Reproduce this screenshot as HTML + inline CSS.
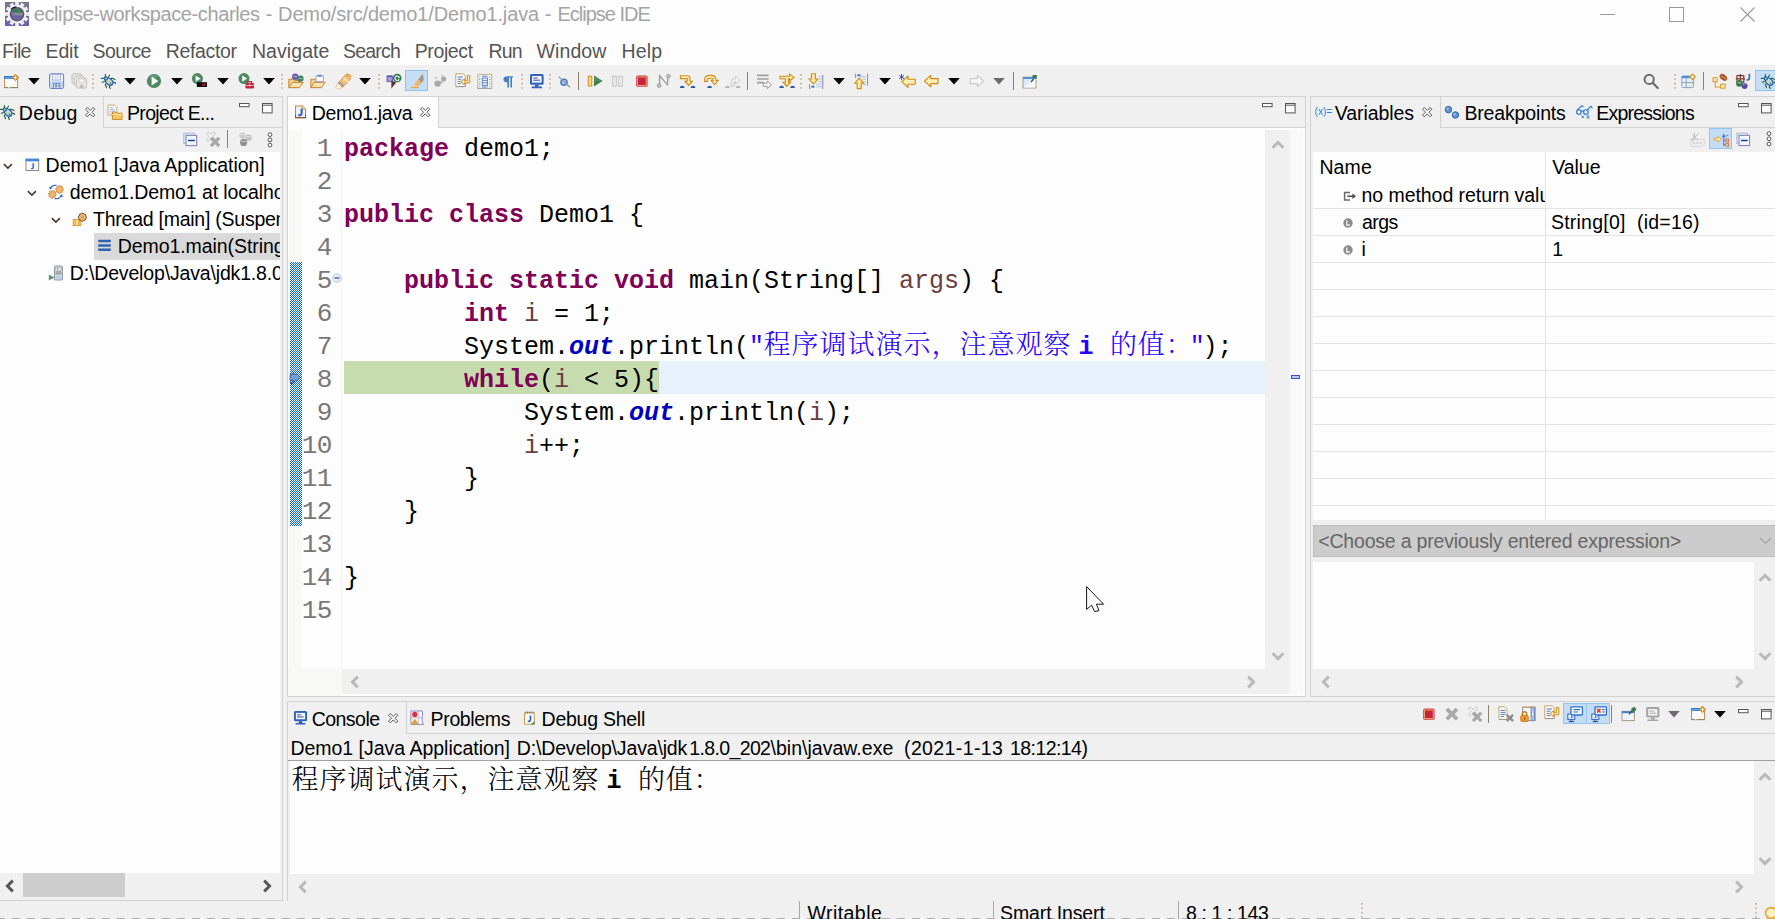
<!DOCTYPE html>
<html><head><meta charset="utf-8"><title>eclipse-workspace-charles - Demo/src/demo1/Demo1.java - Eclipse IDE</title>
<style>
html,body{margin:0;padding:0;}
body{width:1775px;height:919px;overflow:hidden;position:relative;background:#f0f0f0;font-family:'Liberation Sans','Noto Sans CJK SC',sans-serif;}
div,span,svg{position:absolute;box-sizing:border-box;}
.t{white-space:pre;line-height:1;color:#000;font-family:'Liberation Sans','Noto Sans CJK SC',sans-serif;}
.m{font-family:'Liberation Mono','Noto Serif CJK SC',monospace;}
.c{font-family:'Liberation Mono','Noto Serif CJK SC',serif;font-weight:300;}
svg{overflow:visible;}

</style></head><body>
<div style="left:0px;top:0px;width:1775px;height:65px;background:#fdfdfd;"></div>
<div style="left:1600px;top:14px;width:15px;height:1px;background:#999;"></div>
<div style="left:1669px;top:7px;width:15px;height:15px;border:1px solid #999;"></div>
<svg style="left:1740px;top:7px" width="15" height="15" viewBox="0 0 15 15"><path d="M0.5 0.5L14.5 14.5M14.5 0.5L0.5 14.5" stroke="#999" stroke-width="1.1" fill="none"/></svg>
<div style="left:405px;top:70px;width:23px;height:21px;background:#c5def5;border:1px solid #8fc1ec;"></div>
<div style="left:1755px;top:70px;width:21px;height:21px;background:#c5def5;border:1px solid #8fc1ec;"></div>
<svg style="left:3px;top:73px" width="16" height="16" viewBox="0 0 16 16"><rect x="1.6" y="3.6" width="13" height="11" fill="#f8fafe" stroke="#c08a5a" stroke-width="1"/><path d="M1.2 14.6H15" stroke="#8f7f6a" stroke-width="1"/><rect x="1.2" y="3" width="9.6" height="2.8" fill="#2a78cc"/><path d="M2 4.4h8" stroke="#62b0f4" stroke-width="0.9"/><path d="M5 14.6C9 13.8 11.6 11.4 12.4 8" stroke="#fbe9b4" stroke-width="1.1" fill="none" stroke-dasharray="1 0.6"/><path d="M12.5 0.7L16.1 4.4L12.5 8.1L8.9 4.4Z" fill="#c8861c"/><path d="M12.5 1.9L13.2 3.7L15 4.4L13.2 5.1L12.5 6.9L11.8 5.1L10 4.4L11.8 3.7Z" fill="#fff6de"/></svg>
<svg style="left:27.5px;top:78px" width="12" height="7" viewBox="0 0 12 7"><path d="M0.2 0H11.8L6 6.4Z" fill="#000"/></svg>
<svg style="left:48px;top:73px" width="16" height="16" viewBox="0 0 16 16"><rect x="1.6" y="0.8" width="14" height="14.6" rx="1.6" fill="#eef4fc" stroke="#6388cc" stroke-width="1.1"/><rect x="2.2" y="8" width="12.8" height="6.8" fill="#c2daf6"/><rect x="4.6" y="1.4" width="8" height="5.6" fill="#fbfcfe" stroke="#9aa6c8" stroke-width="0.8"/><path d="M6 3.2h5.2M6 5h5.2" stroke="#c2c8da" stroke-width="0.8"/><rect x="5.4" y="10.4" width="6.4" height="5" fill="#e4ecf8" stroke="#5c7fc0" stroke-width="0.9"/><rect x="7" y="11.4" width="2" height="3" fill="#7a8fb8"/><rect x="9.6" y="11.4" width="1" height="3" fill="#7a8fb8"/></svg>
<svg style="left:71px;top:73px" width="16" height="16" viewBox="0 0 16 16"><g fill="#ececec" stroke="#bdbdbd" stroke-width="1"><rect x="1" y="0.8" width="9.5" height="9.5" rx="1.2"/><rect x="3.2" y="3" width="9.5" height="9.5" rx="1.2"/><rect x="5.5" y="5.3" width="9.8" height="9.8" rx="1.2"/></g><rect x="8" y="5.8" width="5" height="3.6" fill="#f6f6f6" stroke="#c8c8c8" stroke-width="0.7"/><rect x="8.6" y="11.6" width="3.8" height="3.4" fill="#bdbdbd"/></svg>
<svg style="left:92.2px;top:74px" width="2" height="16" viewBox="0 0 2 16"><path d="M0.2 0h1.6v1.8h-1.6zM0.2 4.4h1.6v1.6h-1.6zM0.2 8.8h1.6v1.6h-1.6zM0.2 13.2h1.6v1.6h-1.6z" fill="#c9ab8b"/></svg>
<svg style="left:100px;top:73px" width="16" height="16" viewBox="0 0 16 16"><g stroke="#2c6e3e" stroke-width="1.15" fill="none" stroke-linecap="round"><path d="M5.4 1.2V3.8M9.5 2.1L8.3 4.4M1.2 5.4H3.9M2.3 9.4L4.5 8.3M11 5.4H12.8L15 6.6M13.3 9.4H14.8L15.6 10.4M5.4 11.1V12.6L6.4 13.3V14.7M9.5 13.3V14.5L10.4 15.3"/></g><ellipse cx="9.25" cy="8.7" rx="3.05" ry="4.2" transform="rotate(-48 9.25 8.7)" fill="#d4d8cf" stroke="#1e5cb8" stroke-width="1.3"/><path d="M8.2 8.8L10.2 7.2L10.6 8.4L9 10Z" fill="#b4e08c"/><circle cx="10.6" cy="10.4" r="0.9" fill="#3f7a4a"/><circle cx="5.8" cy="5.5" r="1.6" fill="#b9e090" stroke="#1e5cb8" stroke-width="1.2"/></svg>
<svg style="left:124.4px;top:78px" width="12" height="7" viewBox="0 0 12 7"><path d="M0.2 0H11.8L6 6.4Z" fill="#000"/></svg>
<svg style="left:146px;top:73px" width="16" height="16" viewBox="0 0 16 16"><circle cx="8" cy="8" r="7.1" fill="#4b8963"/><path d="M3 4.5A6.5 6.5 0 0 1 12 2.6L8 8Z" fill="#6c9f80" opacity=".6"/><path d="M5.6 3.6V12.4L12.4 8Z" fill="#fdfdfd"/></svg>
<svg style="left:170.5px;top:78px" width="12" height="7" viewBox="0 0 12 7"><path d="M0.2 0H11.8L6 6.4Z" fill="#000"/></svg>
<svg style="left:191px;top:73px" width="16" height="16" viewBox="0 0 16 16"><circle cx="6.4" cy="5.6" r="5.5" fill="#4b8963"/><path d="M4.6 2.4V8.8L9.6 5.6Z" fill="#fdfdfd"/><rect x="5.8" y="9.2" width="10.2" height="4.8" fill="#0a0a0a"/><rect x="11.2" y="10.2" width="3.4" height="2.8" fill="#a8101a"/></svg>
<svg style="left:216.5px;top:78px" width="12" height="7" viewBox="0 0 12 7"><path d="M0.2 0H11.8L6 6.4Z" fill="#000"/></svg>
<svg style="left:238px;top:73px" width="16" height="16" viewBox="0 0 16 16"><circle cx="6" cy="5.6" r="5.5" fill="#4b8963"/><path d="M4.2 2.4V8.8L9.2 5.6Z" fill="#fdfdfd"/><rect x="7.4" y="10" width="8.6" height="5.4" rx="0.8" fill="#c8213a"/><path d="M9.8 10V8.6h3.8V10" fill="none" stroke="#c8213a" stroke-width="1.2"/><path d="M7.4 12.4h8.6" stroke="#f4b9c0" stroke-width="0.9"/><rect x="10.8" y="11.6" width="1.8" height="1.6" fill="#f7d9dd"/></svg>
<svg style="left:262.5px;top:78px" width="12" height="7" viewBox="0 0 12 7"><path d="M0.2 0H11.8L6 6.4Z" fill="#000"/></svg>
<svg style="left:281.0px;top:74px" width="2" height="16" viewBox="0 0 2 16"><path d="M0.2 0h1.6v1.8h-1.6zM0.2 4.4h1.6v1.6h-1.6zM0.2 8.8h1.6v1.6h-1.6zM0.2 13.2h1.6v1.6h-1.6z" fill="#c9ab8b"/></svg>
<svg style="left:288px;top:73px" width="16" height="16" viewBox="0 0 16 16"><path d="M0.8 6.2h4.4l1.2 1.4h4.8v7H0.8z" fill="#f3cf8f" stroke="#c98a35" stroke-width="1"/><path d="M0.8 14.6L4.2 9.4H15.2L11.4 14.6Z" fill="#fbe3b0" stroke="#c98a35" stroke-width="1"/><circle cx="7.2" cy="3.8" r="3.2" fill="#6d5dab"/><path d="M5.4 3.6h3.6" stroke="#b8add8" stroke-width="1"/><circle cx="12.4" cy="5.6" r="3.2" fill="#3f7f5c"/><path d="M10.6 5.4h3.6" stroke="#a9cbb8" stroke-width="1"/></svg>
<svg style="left:310px;top:73px" width="16" height="16" viewBox="0 0 16 16"><path d="M0.8 6.2h4.4l1.2 1.4h4.8v7H0.8z" fill="#f3cf8f" stroke="#c98a35" stroke-width="1"/><path d="M0.8 14.6L4.2 9.4H15.2L11.4 14.6Z" fill="#fbe3b0" stroke="#c98a35" stroke-width="1"/><rect x="6" y="3" width="7.4" height="5.6" fill="#fbfbfd" stroke="#9aa2c8" stroke-width="0.9"/><rect x="7.6" y="1.8" width="4.2" height="1.8" fill="#5b86c8"/></svg>
<svg style="left:335px;top:73px" width="16" height="16" viewBox="0 0 16 16"><path d="M11.6 0.8L15.6 2.2L15 6.4L9 12.8L4.4 8.6Z" fill="#f7c07c" stroke="#dc8e30" stroke-width="0.9"/><path d="M8.6 4.8L12.8 8.6" stroke="#fce6c4" stroke-width="1.8"/><path d="M4.4 8.6L9 12.8L7.4 14.4L2.8 10.2Z" fill="#a6a6a6" stroke="#8c8c8c" stroke-width="0.6"/><path d="M2.8 10.2L7.4 14.4L3 16L0.6 14.4Z" fill="#fef8ec" stroke="#ecb86e" stroke-width="0.7"/><path d="M12.2 2.4L13.4 3L12.4 4.4Z" fill="#3c68b8"/></svg>
<svg style="left:359.4px;top:78px" width="12" height="7" viewBox="0 0 12 7"><path d="M0.2 0H11.8L6 6.4Z" fill="#000"/></svg>
<svg style="left:378.0px;top:74px" width="2" height="16" viewBox="0 0 2 16"><path d="M0.2 0h1.6v1.8h-1.6zM0.2 4.4h1.6v1.6h-1.6zM0.2 8.8h1.6v1.6h-1.6zM0.2 13.2h1.6v1.6h-1.6z" fill="#c9ab8b"/></svg>
<svg style="left:386px;top:73px" width="16" height="16" viewBox="0 0 16 16"><rect x="1" y="3.2" width="5.4" height="5.4" fill="#a79ddb" stroke="#6b5fb2" stroke-width="1"/><path d="M1 3.2h5.4" stroke="#5a4fa8" stroke-width="1.4"/><path d="M5.4 7.4V15.6L10.2 9.6Z" fill="#5a2f33"/><circle cx="11.2" cy="5" r="4.3" fill="#2f7a4d"/><path d="M13.2 4A2.3 2.3 0 1 0 13.2 6.4" fill="none" stroke="#fdfdfd" stroke-width="1.1"/><path d="M11.6 5h2.6L13 3.4" fill="#fdfdfd"/></svg>
<svg style="left:409px;top:73px" width="16" height="16" viewBox="0 0 16 16"><path d="M13.4 1.2L14.6 6.8L9.4 12.6L5.8 11L9 7.4Z" fill="#f4b566" stroke="#e09a46" stroke-width="0.6"/><path d="M13.4 1.2L14.6 6.8L12.4 9.2L10.4 5.6Z" fill="#9a9a9a"/><path d="M10.4 5.6L12.4 9.2" stroke="#7c7c7c" stroke-width="0.8"/><path d="M9 7.4L5.8 11L9.4 12.6L7 14.2L3.6 13.4Z" fill="#f7c88a"/><path d="M1.8 14.6H10" stroke="#f0a04a" stroke-width="1.2"/></svg>
<svg style="left:432px;top:73px" width="16" height="16" viewBox="0 0 16 16"><circle cx="5.6" cy="10.6" r="3.2" fill="#a9a9a9"/><circle cx="11.6" cy="6" r="2.5" fill="#a9a9a9"/><path d="M2.4 5h3.2M9.6 2.2l1.4 1" stroke="#b5b5b5" stroke-width="1.1"/><circle cx="9.2" cy="9.2" r="1.3" fill="#b5b5b5"/></svg>
<svg style="left:455px;top:73px" width="16" height="16" viewBox="0 0 16 16"><path d="M0.8 0.8H8.2L10.4 3V13.6H0.8Z" fill="#fbfbfb" stroke="#c9a768" stroke-width="1"/><path d="M2.6 4h5.4M2.6 6.2h4M2.6 8.4h3M2.6 10.6h3.4" stroke="#4f7fc8" stroke-width="1"/><path d="M0.8 13.6h9.6" stroke="#9a9a9a" stroke-width="1"/><path d="M12.4 2.6h2.4v7.2H9.4v2L5.8 8.8L9.4 5.8v2h3z" fill="#fdf0c8" stroke="#d18b1c" stroke-width="1"/></svg>
<svg style="left:477px;top:73px" width="16" height="16" viewBox="0 0 16 16"><rect x="0.8" y="1.4" width="14" height="14" fill="#fbfbfb" stroke="#c4ad86" stroke-width="1"/><path d="M0.8 15.4h14" stroke="#a3a3a3" stroke-width="1"/><path d="M2.8 3.4v10.4M12.8 3.4v10.4" stroke="#5a86cc" stroke-width="1" stroke-dasharray="1.2 1.2"/><rect x="5.2" y="5" width="5.2" height="7.4" fill="#f2f6fd" stroke="#4a78c4" stroke-width="0.9"/><path d="M5 3.2h5.6M5.4 7.4h4.8M5.4 9.8h4.8M5 14h5.6" stroke="#4a78c4" stroke-width="0.9"/></svg>
<svg style="left:500px;top:73px" width="16" height="16" viewBox="0 0 16 16"><path d="M7.6 3.2H13V4.6H12V14.6H10.4V4.6H9V14.6H7.4V9.4C4.8 9.4 3.4 8.2 3.4 6.2C3.4 4.2 5 3.2 7.6 3.2Z" fill="#4a7ec4"/></svg>
<svg style="left:521.0px;top:74px" width="2" height="16" viewBox="0 0 2 16"><path d="M0.2 0h1.6v1.8h-1.6zM0.2 4.4h1.6v1.6h-1.6zM0.2 8.8h1.6v1.6h-1.6zM0.2 13.2h1.6v1.6h-1.6z" fill="#c9ab8b"/></svg>
<svg style="left:529px;top:73px" width="16" height="16" viewBox="0 0 16 16"><rect x="1" y="1" width="13.6" height="10.8" rx="1.6" fill="#2f63ba"/><rect x="3" y="3" width="9.6" height="6.6" fill="#f4f6fc"/><path d="M4.2 5h4.4" stroke="#6a4fa0" stroke-width="1.1"/><path d="M4.2 7.2h6.8" stroke="#2f63ba" stroke-width="1.1"/><rect x="6" y="11.8" width="3.6" height="1.8" fill="#2a5098"/><rect x="2.6" y="13.6" width="10.4" height="1.6" rx="0.5" fill="#2f63ba"/></svg>
<svg style="left:549.0px;top:74px" width="2" height="16" viewBox="0 0 2 16"><path d="M0.2 0h1.6v1.8h-1.6zM0.2 4.4h1.6v1.6h-1.6zM0.2 8.8h1.6v1.6h-1.6zM0.2 13.2h1.6v1.6h-1.6z" fill="#c9ab8b"/></svg>
<svg style="left:556px;top:73px" width="16" height="16" viewBox="0 0 16 16"><circle cx="8" cy="9.2" r="3" fill="#b4cbea" stroke="#3f7ad4" stroke-width="1.6"/><path d="M2.6 3.6L14 14.2" stroke="#959595" stroke-width="1.2"/></svg>
<div style="left:578.0px;top:72px;width:1.3px;height:18px;background:#8d8468"></div>
<svg style="left:587px;top:73px" width="16" height="16" viewBox="0 0 16 16"><rect x="1.2" y="3.2" width="3.6" height="9.8" fill="#f9d978" stroke="#cf8d1e" stroke-width="1"/><path d="M7 2.6V13.4L15.6 8Z" fill="#3f8153"/><path d="M7 2.6L15.6 8H7Z" fill="#5c9870" opacity=".6"/></svg>
<svg style="left:610px;top:73px" width="16" height="16" viewBox="0 0 16 16"><rect x="2.6" y="3.2" width="3.8" height="10" fill="#e9e9e9" stroke="#c6c6c6" stroke-width="1"/><rect x="8.6" y="3.2" width="3.8" height="10" fill="#e9e9e9" stroke="#c6c6c6" stroke-width="1"/></svg>
<svg style="left:634px;top:73px" width="16" height="16" viewBox="0 0 16 16"><rect x="2.2" y="2.6" width="11.4" height="11.2" rx="1.6" fill="#d7334c"/><rect x="3.6" y="4" width="8.6" height="8.4" fill="#c7223f" stroke="#f3c26e" stroke-width="0.8"/></svg>
<svg style="left:656px;top:73px" width="16" height="16" viewBox="0 0 16 16"><path d="M3.6 11.4V2.8L11.4 11.6L12 4" fill="none" stroke="#9c9c9c" stroke-width="1.3"/><circle cx="3.2" cy="12.6" r="1.8" fill="#c9c9c9" stroke="#8f8f8f" stroke-width="0.9"/><circle cx="12.4" cy="3.2" r="1.8" fill="#c9c9c9" stroke="#8f8f8f" stroke-width="0.9"/></svg>
<svg style="left:679px;top:73px" width="16" height="16" viewBox="0 0 16 16"><path d="M1.4 2.8H8.6Q11 2.8 11 5.4V8.2H13.4L9.6 12.4L5.8 8.2H8.2V5.6H1.4Z" fill="#fdeeb4" stroke="#d08a18" stroke-width="1.1"/><path d="M0.8000000000000003 15A2.4 2.2 0 0 1 5.6 15Z" fill="#2c5aa8"/><path d="M11.6 15A2.4 2.2 0 0 1 16.4 15Z" fill="#2c5aa8"/></svg>
<svg style="left:703px;top:73px" width="16" height="16" viewBox="0 0 16 16"><path d="M1.6 8.4V6.6Q1.6 2.4 6.6 2.4H8.4Q13 2.4 13 6.6V7.4H15.2L11.6 11.6L8 7.4H10.2V6.8Q10.2 5.2 8.4 5.2H6.6Q4.4 5.2 4.4 6.8V8.4Z" fill="#fdeeb4" stroke="#d08a18" stroke-width="1.1"/><path d="M4.199999999999999 15A2.4 2.2 0 0 1 9.0 15Z" fill="#2c5aa8"/></svg>
<svg style="left:725px;top:73px" width="16" height="16" viewBox="0 0 16 16"><path d="M6.4 13.2V8.4Q6.4 5.8 9 5.8H10.6V3.4L14.8 7.2L10.6 11V8.6H9.2V13.2Z" fill="#f4f4f4" stroke="#c9c9c9" stroke-width="1"/><path d="M0.0 15A2.4 2.2 0 0 1 4.8 15Z" fill="#b5b5b5"/><path d="M10.799999999999999 15A2.4 2.2 0 0 1 15.6 15Z" fill="#b5b5b5"/></svg>
<div style="left:747.0px;top:72px;width:1.3px;height:18px;background:#8d8468"></div>
<svg style="left:756px;top:73px" width="16" height="16" viewBox="0 0 16 16"><path d="M1 2.4h11.6M1 6h11.6M1 9.6h7" stroke="#9d9d9d" stroke-width="1.7"/><path d="M7.4 10.2h3.8V8l4.2 3.8L11.2 15.6V13.4H7.4Z" fill="#f7f7f7" stroke="#9d9d9d" stroke-width="1"/></svg>
<svg style="left:779px;top:73px" width="16" height="16" viewBox="0 0 16 16"><path d="M1 3.2H10.6V1L15.2 4.4L10.6 7.8V5.8H9.4V9.2H11.6L7.8 13.4L4 9.2H6.4V5.8H1Z" fill="#fdeeb4" stroke="#d08a18" stroke-width="1.1"/><path d="M0.20000000000000018 15A2.4 2.2 0 0 1 5.0 15Z" fill="#2c5aa8"/><path d="M11.2 15A2.4 2.2 0 0 1 16.0 15Z" fill="#2c5aa8"/></svg>
<svg style="left:800.2px;top:74px" width="2" height="16" viewBox="0 0 2 16"><path d="M0.2 0h1.6v1.8h-1.6zM0.2 4.4h1.6v1.6h-1.6zM0.2 8.8h1.6v1.6h-1.6zM0.2 13.2h1.6v1.6h-1.6z" fill="#c9ab8b"/></svg>
<svg style="left:808px;top:73px" width="16" height="16" viewBox="0 0 16 16"><path d="M11 3.4h3M11 6h3M10 8.6h4M8 11.2h6M8 13.8h6" stroke="#a9c8e6" stroke-width="1"/><path d="M1.6 11.4v4.6M14.8 2v14" stroke="#8d86b8" stroke-width="1"/><rect x="3.4" y="12.8" width="3" height="1.8" fill="#3a6fc4"/><path d="M3.4 0.8H7.4V6H9.8L5.4 11L1 6H3.4Z" fill="#fde9a6" stroke="#d08a18" stroke-width="1.1"/></svg>
<svg style="left:832.5px;top:78px" width="12" height="7" viewBox="0 0 12 7"><path d="M0.2 0H11.8L6 6.4Z" fill="#000"/></svg>
<svg style="left:854px;top:73px" width="16" height="16" viewBox="0 0 16 16"><path d="M6 3.6h6M8 6.2h4M9 8.8h3M9 11.4h3" stroke="#a9c8e6" stroke-width="1"/><path d="M1.6 0.6v4.4M13.6 0.6v12" stroke="#8d86b8" stroke-width="1"/><rect x="3.4" y="1.4" width="3" height="1.8" fill="#3a6fc4"/><path d="M3.2 15.6H7.2V10.2H9.6L5.2 5.2L0.8 10.2H3.2Z" fill="#fde9a6" stroke="#d08a18" stroke-width="1.1"/></svg>
<svg style="left:878.5px;top:78px" width="12" height="7" viewBox="0 0 12 7"><path d="M0.2 0H11.8L6 6.4Z" fill="#000"/></svg>
<svg style="left:899px;top:73px" width="16" height="16" viewBox="0 0 16 16"><g transform="translate(1.2,0.6)"><path d="M1.6 8L7.8 2.4V5.6H15V10.6H7.8V13.8Z" fill="#fdefb6" stroke="#cd8712" stroke-width="1.1" stroke-linejoin="round"/></g><path d="M2.6 1v6M0.2 2.4l4.8 3.2M5 2.4L0.2 5.6" stroke="#3a4fb0" stroke-width="1"/></svg>
<svg style="left:923px;top:73px" width="16" height="16" viewBox="0 0 16 16"><path d="M1.6 8L7.8 2.4V5.6H15V10.6H7.8V13.8Z" fill="#fdefb6" stroke="#cd8712" stroke-width="1.1" stroke-linejoin="round"/></svg>
<svg style="left:947.7px;top:78px" width="12" height="7" viewBox="0 0 12 7"><path d="M0.2 0H11.8L6 6.4Z" fill="#000"/></svg>
<svg style="left:969px;top:73px" width="16" height="16" viewBox="0 0 16 16"><path d="M14.6 8L8.4 2.4V5.6H1.2V10.6H8.4V13.8Z" fill="#f8f8f8" stroke="#c9c9c9" stroke-width="1.1" stroke-linejoin="round"/></svg>
<svg style="left:993.3px;top:78px" width="12" height="7" viewBox="0 0 12 7"><path d="M0.2 0H11.8L6 6.4Z" fill="#6f6a6f"/></svg>
<div style="left:1013.0px;top:72px;width:1.3px;height:18px;background:#8d8468"></div>
<svg style="left:1022px;top:73px" width="16" height="16" viewBox="0 0 16 16"><rect x="1" y="4.2" width="13" height="10.8" fill="#d7ebf9" stroke="#a59a80" stroke-width="1"/><path d="M1.6 14.4L13.4 5.4V14.4Z" fill="#f4fafe"/><rect x="1" y="4" width="13" height="2" fill="#4a90d9"/><path d="M11.6 1.2L15.4 3.2L13.8 6.2L10 4.2Z" fill="#3c7a4e" transform="rotate(-25 12.7 3.7)"/><path d="M11.6 6L9 9.2" stroke="#3a3a6a" stroke-width="1.2"/></svg>
<svg style="left:1643px;top:73px" width="16" height="16" viewBox="0 0 16 16"><circle cx="6.2" cy="6.4" r="4.6" fill="none" stroke="#6a6a6a" stroke-width="2"/><path d="M9.6 9.8L14.8 15" stroke="#6a6a6a" stroke-width="2.2" stroke-linecap="round"/></svg>
<svg style="left:1674.0px;top:74px" width="2" height="16" viewBox="0 0 2 16"><path d="M0.2 0h1.6v1.8h-1.6zM0.2 4.4h1.6v1.6h-1.6zM0.2 8.8h1.6v1.6h-1.6zM0.2 13.2h1.6v1.6h-1.6z" fill="#c9ab8b"/></svg>
<svg style="left:1681px;top:73px" width="16" height="16" viewBox="0 0 16 16"><rect x="0.8" y="3" width="11.8" height="11.6" rx="1" fill="#e3f0fb" stroke="#93a1b5" stroke-width="1"/><rect x="0.8" y="3" width="8" height="2.2" fill="#4a90d9"/><path d="M5.2 5.2v9.4M5.2 9.6h7.4M0.8 9.6h4.4" stroke="#93a1b5" stroke-width="1"/><path d="M8 13.4L11.8 10.4" stroke="#f1d9a0" stroke-width="1"/><path d="M11.6 0.2L15.2 3.8L11.6 7.4L8 3.8Z" fill="#d8961e"/><path d="M11.6 1.4L12.3 3.1L14 3.8L12.3 4.5L11.6 6.2L10.9 4.5L9.2 3.8L10.9 3.1Z" fill="#fff6de"/></svg>
<div style="left:1703.0px;top:72px;width:1.3px;height:18px;background:#8d8468"></div>
<svg style="left:1712px;top:73px" width="16" height="16" viewBox="0 0 16 16"><path d="M3.2 8v6h6.4" fill="none" stroke="#d89a2a" stroke-width="1.1"/><rect x="1" y="4.8" width="4.2" height="4" fill="#fdebb0" stroke="#d89a2a" stroke-width="1"/><rect x="8.6" y="11.2" width="4.6" height="4" fill="#fdebb0" stroke="#d89a2a" stroke-width="1"/><ellipse cx="11.4" cy="4.4" rx="4.2" ry="2.8" transform="rotate(38 11.4 4.4)" fill="#a8562a"/><path d="M9 2.6L13.8 6.2" stroke="#e9b78a" stroke-width="0.9"/></svg>
<svg style="left:1735px;top:73px" width="16" height="16" viewBox="0 0 16 16"><path d="M2 2.6h6.8v6.6H2zM5.4 1v9.6M0.8 5.8h9.4" fill="none" stroke="#7b3b2c" stroke-width="1.2"/><path d="M14.4 0.8V5Q14.4 7 11.6 7" fill="none" stroke="#2f70c4" stroke-width="1.7"/><circle cx="4.4" cy="10.4" r="3.3" fill="#3a7852"/><path d="M2.6 9.8h3.6" stroke="#b8d4c2" stroke-width="1"/><circle cx="9.6" cy="13" r="3" fill="#5b4d9c"/><path d="M8 12.4A2 2 0 0 1 10.6 11" stroke="#b5acd8" stroke-width="0.8" fill="none"/></svg>
<svg style="left:1760px;top:73px" width="16" height="16" viewBox="0 0 16 16"><g stroke="#2c6e3e" stroke-width="1.15" fill="none" stroke-linecap="round"><path d="M5.4 1.2V3.8M9.5 2.1L8.3 4.4M1.2 5.4H3.9M2.3 9.4L4.5 8.3M11 5.4H12.8L15 6.6M13.3 9.4H14.8L15.6 10.4M5.4 11.1V12.6L6.4 13.3V14.7M9.5 13.3V14.5L10.4 15.3"/></g><ellipse cx="9.25" cy="8.7" rx="3.05" ry="4.2" transform="rotate(-48 9.25 8.7)" fill="#d4d8cf" stroke="#1e5cb8" stroke-width="1.3"/><path d="M8.2 8.8L10.2 7.2L10.6 8.4L9 10Z" fill="#b4e08c"/><circle cx="10.6" cy="10.4" r="0.9" fill="#3f7a4a"/><circle cx="5.8" cy="5.5" r="1.6" fill="#b9e090" stroke="#1e5cb8" stroke-width="1.2"/></svg>
<div style="left:-1px;top:96px;width:284px;height:805px;border:1px solid #d2d2d2;"></div>
<div style="left:103px;top:97px;width:179px;height:31px;border-left:1px solid #d2d2d2;border-bottom:1px solid #d2d2d2;"></div>
<div style="left:0px;top:152px;width:280px;height:721px;background:#fdfdfd;"></div>
<div style="left:94px;top:233px;width:186px;height:27px;background:#d9d9d9;"></div>
<div style="left:23px;top:873px;width:102px;height:24px;background:#cdcdcd;"></div>
<div style="left:287px;top:96px;width:1019px;height:601px;border:1px solid #d2d2d2;"></div>
<div style="left:288px;top:97px;width:151px;height:31px;background:#fdfdfd;border-right:1px solid #d2d2d2;"></div>
<div style="left:439px;top:127px;width:866px;height:1px;background:#d2d2d2;"></div>
<div style="left:288px;top:128px;width:1017px;height:568px;background:#fdfdfd;"></div>
<div style="left:289px;top:130px;width:13px;height:566px;background:#f8f8f6;"></div>
<div style="left:288px;top:668px;width:54px;height:28px;background:#f8f8f6;"></div>
<div style="left:341px;top:130px;width:1px;height:538px;background:#f5f4f1;"></div>
<div style="left:1265px;top:130px;width:25px;height:539px;background:#f0f0f0;"></div>
<div style="left:342px;top:669px;width:948px;height:25px;background:#f0f0f0;"></div>
<div style="left:1290px;top:130px;width:13px;height:564px;background:#f9f9f9;"></div>
<div style="left:344px;top:361px;width:921px;height:33px;background:#e8f2fe;"></div>
<div style="left:344px;top:361px;width:315px;height:33px;background:#c6dbae;"></div>
<div style="left:290px;top:262px;width:12px;height:264px;background:conic-gradient(#0a6ad6 25%,#fdfdfd 0 50%,#0a6ad6 0 75%,#fdfdfd 0) 0 0/2px 2px;"></div>
<div style="left:1291px;top:375px;width:9px;height:4px;background:#b9c8f5;border:1px solid #3b4fd8;"></div>
<div style="left:1310px;top:96px;width:470px;height:601px;border:1px solid #d2d2d2;"></div>
<div style="left:1440px;top:97px;width:340px;height:31px;border-left:1px solid #d2d2d2;border-bottom:1px solid #d2d2d2;"></div>
<div style="left:1313px;top:152px;width:462px;height:368px;background:#fdfdfd;"></div>
<div style="left:1313px;top:208px;width:462px;height:1px;background:#e3e3e3;"></div>
<div style="left:1313px;top:235px;width:462px;height:1px;background:#e3e3e3;"></div>
<div style="left:1313px;top:262px;width:462px;height:1px;background:#e3e3e3;"></div>
<div style="left:1313px;top:289px;width:462px;height:1px;background:#e3e3e3;"></div>
<div style="left:1313px;top:316px;width:462px;height:1px;background:#e3e3e3;"></div>
<div style="left:1313px;top:343px;width:462px;height:1px;background:#e3e3e3;"></div>
<div style="left:1313px;top:370px;width:462px;height:1px;background:#e3e3e3;"></div>
<div style="left:1313px;top:397px;width:462px;height:1px;background:#e3e3e3;"></div>
<div style="left:1313px;top:424px;width:462px;height:1px;background:#e3e3e3;"></div>
<div style="left:1313px;top:451px;width:462px;height:1px;background:#e3e3e3;"></div>
<div style="left:1313px;top:478px;width:462px;height:1px;background:#e3e3e3;"></div>
<div style="left:1313px;top:505px;width:462px;height:1px;background:#e3e3e3;"></div>
<div style="left:1545px;top:152px;width:1px;height:368px;background:#e3e3e3;"></div>
<div style="left:1709px;top:128px;width:23px;height:21px;background:#c4ddf5;border:1px solid #93c4ee;"></div>
<div style="left:1313px;top:525px;width:463px;height:32px;background:#cccccc;border:1px solid #bdbdbd;"></div>
<div style="left:1313px;top:562px;width:441px;height:107px;background:#fdfdfd;"></div>
<div style="left:287px;top:701px;width:1493px;height:200px;border:1px solid #d2d2d2;border-bottom:none;"></div>
<div style="left:406px;top:702px;width:1374px;height:32px;border-left:1px solid #d2d2d2;border-bottom:1px solid #d2d2d2;"></div>
<div style="left:288px;top:760px;width:1487px;height:1px;background:#a0a0a0;"></div>
<div style="left:290px;top:761px;width:1464px;height:113px;background:#fdfdfd;"></div>
<div style="left:1563px;top:703px;width:47px;height:21px;background:#c4ddf5;border:1px solid #93c4ee;"></div>
<div style="left:1586px;top:703px;width:1px;height:21px;background:#99c9ef;"></div>
<div style="left:799px;top:901px;width:1px;height:18px;background:#a8a8a8;"></div>
<div style="left:993px;top:901px;width:1px;height:18px;background:#a8a8a8;"></div>
<div style="left:1178px;top:901px;width:1px;height:18px;background:#a8a8a8;"></div>
<div style="left:0px;top:917.6px;width:1775px;height:1.4px;background:repeating-linear-gradient(90deg,#adadad 0 7.5px,transparent 7.5px 15px) -3.2px 0;"></div>
<svg style="left:5px;top:2px" width="24" height="24" viewBox="0 0 24 24"><defs><linearGradient id="eg" x1="0" y1="0" x2="0" y2="1"><stop offset="0" stop-color="#8278a8"/><stop offset="0.5" stop-color="#746c9e"/><stop offset="1" stop-color="#6a62a8"/></linearGradient></defs><rect x="0" y="0" width="24" height="24" fill="url(#eg)"/><path d="M0 0H7L0 8ZM24 0H17L24 8Z" fill="#77777c" opacity=".8"/><g fill="#efefef"><circle cx="12" cy="12" r="9.6"/><rect x="10.2" y="0" width="3.6" height="4" transform="rotate(0 12 12)"/><rect x="10.2" y="0" width="3.6" height="4" transform="rotate(30 12 12)"/><rect x="10.2" y="0" width="3.6" height="4" transform="rotate(60 12 12)"/><rect x="10.2" y="0" width="3.6" height="4" transform="rotate(90 12 12)"/><rect x="10.2" y="0" width="3.6" height="4" transform="rotate(120 12 12)"/><rect x="10.2" y="0" width="3.6" height="4" transform="rotate(150 12 12)"/><rect x="10.2" y="0" width="3.6" height="4" transform="rotate(180 12 12)"/><rect x="10.2" y="0" width="3.6" height="4" transform="rotate(210 12 12)"/><rect x="10.2" y="0" width="3.6" height="4" transform="rotate(240 12 12)"/><rect x="10.2" y="0" width="3.6" height="4" transform="rotate(270 12 12)"/><rect x="10.2" y="0" width="3.6" height="4" transform="rotate(300 12 12)"/><rect x="10.2" y="0" width="3.6" height="4" transform="rotate(330 12 12)"/></g><circle cx="12" cy="12.2" r="7.3" fill="#54545e"/><circle cx="12" cy="12.2" r="6" fill="#6a63a6"/><path d="M6.2 11A6 6 0 0 1 17.8 11Z" fill="#3f7a5c"/><path d="M6 7.4A7.4 7.4 0 0 1 11.4 4.9" stroke="#0a0a3a" stroke-width="1.3" fill="none"/><rect x="8.8" y="10.8" width="9" height="2.6" fill="#8c8c98"/><path d="M7.6 13.4V11h2" stroke="#8a6fc0" stroke-width="1.2" fill="none"/></svg>
<svg style="left:-1px;top:104px" width="16" height="16" viewBox="0 0 16 16"><g stroke="#2c6e3e" stroke-width="1.15" fill="none" stroke-linecap="round"><path d="M5.4 1.2V3.8M9.5 2.1L8.3 4.4M1.2 5.4H3.9M2.3 9.4L4.5 8.3M11 5.4H12.8L15 6.6M13.3 9.4H14.8L15.6 10.4M5.4 11.1V12.6L6.4 13.3V14.7M9.5 13.3V14.5L10.4 15.3"/></g><ellipse cx="9.25" cy="8.7" rx="3.05" ry="4.2" transform="rotate(-48 9.25 8.7)" fill="#d4d8cf" stroke="#1e5cb8" stroke-width="1.3"/><path d="M8.2 8.8L10.2 7.2L10.6 8.4L9 10Z" fill="#b4e08c"/><circle cx="10.6" cy="10.4" r="0.9" fill="#3f7a4a"/><circle cx="5.8" cy="5.5" r="1.6" fill="#b9e090" stroke="#1e5cb8" stroke-width="1.2"/></svg>
<svg style="left:84.7px;top:106.9px" width="10.4" height="10.4" viewBox="0 0 11 11"><path d="M0.6 2.4L2.4 0.6L5.5 3.7L8.6 0.6L10.4 2.4L7.3 5.5L10.4 8.6L8.6 10.4L5.5 7.3L2.4 10.4L0.6 8.6L3.7 5.5Z" fill="#fcfcfc" stroke="#4c4c4c" stroke-width="1" stroke-linejoin="round"/></svg>
<svg style="left:106.5px;top:103.5px" width="16" height="16" viewBox="0 0 16 16"><path d="M1 1H7.4L9.8 3.4V11H1Z" fill="#fdfdfd" stroke="#c9a36a" stroke-width="0.9"/><path d="M2.6 3.6h3.6M2.6 5.4h5.4M2.6 7.2h5.4M2.6 9h2" stroke="#7aa2d8" stroke-width="0.7"/><path d="M5.4 8H9l1 1.2h5V15.4H5.4Z" fill="#f8c764" stroke="#c98a2c" stroke-width="1"/><path d="M5.4 10.6h9.6" stroke="#fde6a8" stroke-width="1"/></svg>
<svg style="left:239px;top:103px" width="11" height="5" viewBox="0 0 11 5"><rect x="0.5" y="0.5" width="9.6" height="3.2" fill="#fcfcfc" stroke="#555" stroke-width="1"/></svg>
<svg style="left:262px;top:103px" width="11" height="11" viewBox="0 0 11 11"><rect x="0.5" y="0.5" width="9.6" height="9.4" fill="#fcfcfc" stroke="#555" stroke-width="1"/><path d="M0.5 2.2h9.6" stroke="#555" stroke-width="1"/></svg>
<svg style="left:182px;top:130.5px" width="16" height="16" viewBox="0 0 16 16"><rect x="1.8" y="2.2" width="10.6" height="10.2" fill="#dceefa" stroke="#a9b7d6" stroke-width="1"/><rect x="4" y="4.4" width="10.6" height="10.2" fill="#eef7fd" stroke="#8a84b4" stroke-width="1.1"/><path d="M6 9.5h6.8" stroke="#1f3f9a" stroke-width="1.5"/></svg>
<svg style="left:205px;top:130.5px" width="16" height="16" viewBox="0 0 16 16"><path d="M0.6 2.4L2.4 0.6L5.5 3.7L8.6 0.6L10.4 2.4L7.3 5.5L10.4 8.6L8.6 10.4L5.5 7.3L2.4 10.4L0.6 8.6L3.7 5.5Z" transform="translate(0.6,0.2) scale(0.98)" fill="#f4f4f4" stroke="#bdbdbd" stroke-width="0.9"/><path d="M0.6 2.4L2.4 0.6L5.5 3.7L8.6 0.6L10.4 2.4L7.3 5.5L10.4 8.6L8.6 10.4L5.5 7.3L2.4 10.4L0.6 8.6L3.7 5.5Z" transform="translate(4.6,5.4) scale(1.0)" fill="#a9a9a9" stroke="#9c9c9c" stroke-width="0.6"/></svg>
<div style="left:227.0px;top:130px;width:1.3px;height:18px;background:#8d8468"></div>
<svg style="left:237px;top:131px" width="16" height="16" viewBox="0 0 16 16"><circle cx="5.4" cy="4.6" r="3" fill="#c9c9c9"/><circle cx="11.6" cy="6.8" r="3.2" fill="#c2c2c2"/><path d="M3 3.6h4.6M9.2 5.8h4.8" stroke="#e6e6e6" stroke-width="1"/><circle cx="6.6" cy="11.4" r="3.6" fill="#929292"/><path d="M4 10.4h5.2" stroke="#c4c4c4" stroke-width="1"/></svg>
<svg style="left:267.4px;top:131.8px" width="6" height="16" viewBox="0 0 6 16"><g fill="#fcfcfc" stroke="#444" stroke-width="0.9"><circle cx="3" cy="2.6" r="1.9"/><circle cx="3" cy="7.8" r="1.9"/><circle cx="3" cy="13" r="1.9"/></g></svg>
<svg style="left:3px;top:162.6px" width="10" height="7" viewBox="0 0 10 7"><path d="M0.9 1.1L4.9 5.1L8.9 1.1" fill="none" stroke="#4a3838" stroke-width="1.6"/></svg>
<svg style="left:24.8px;top:157px" width="15" height="15" viewBox="0 0 16 16"><rect x="1" y="2.4" width="13.6" height="12" fill="#f4f7fd" stroke="#a47f72" stroke-width="1"/><rect x="0.6" y="1.8" width="14.4" height="2.8" fill="#3f8ad8"/><path d="M8.8 6.6V11Q8.8 12.6 6.6 12.4" fill="none" stroke="#3565b8" stroke-width="1.5"/></svg>
<svg style="left:27px;top:189.6px" width="10" height="7" viewBox="0 0 10 7"><path d="M0.9 1.1L4.9 5.1L8.9 1.1" fill="none" stroke="#4a3838" stroke-width="1.6"/></svg>
<svg style="left:48px;top:184px" width="16" height="16" viewBox="0 0 16 16"><path d="M8.6 1.3Q4.4 0.6 2.6 4" fill="none" stroke="#1f5fc0" stroke-width="1.1"/><path d="M1.2 2.6L2 5.6L4.4 3.8Z" fill="#1f5fc0"/><path d="M6.8 14.6Q11 15.4 13.2 12" fill="none" stroke="#1f5fc0" stroke-width="1.1"/><path d="M14.8 13.2L14 10.2L11.6 12Z" fill="#1f5fc0"/><polygon points="15.40,5.50 15.33,6.26 14.46,6.72 14.16,7.28 14.26,8.26 13.67,8.74 12.72,8.46 12.12,8.64 11.50,9.40 10.74,9.33 10.28,8.46 9.72,8.16 8.74,8.26 8.26,7.67 8.54,6.72 8.36,6.12 7.60,5.50 7.67,4.74 8.54,4.28 8.84,3.72 8.74,2.74 9.33,2.26 10.28,2.54 10.88,2.36 11.50,1.60 12.26,1.67 12.72,2.54 13.28,2.84 14.26,2.74 14.74,3.33 14.46,4.28 14.64,4.88" fill="#f8b663" stroke="#bd7730" stroke-width="0.8" stroke-linejoin="round"/><circle cx="11.5" cy="5.5" r="1.01" fill="#fdf6ea" stroke="#bd7730" stroke-width="0.5"/><polygon points="8.30,10.40 8.23,11.16 7.36,11.62 7.06,12.18 7.16,13.16 6.57,13.64 5.62,13.36 5.02,13.54 4.40,14.30 3.64,14.23 3.18,13.36 2.62,13.06 1.64,13.16 1.16,12.57 1.44,11.62 1.26,11.02 0.50,10.40 0.57,9.64 1.44,9.18 1.74,8.62 1.64,7.64 2.23,7.16 3.18,7.44 3.78,7.26 4.40,6.50 5.16,6.57 5.62,7.44 6.18,7.74 7.16,7.64 7.64,8.23 7.36,9.18 7.54,9.78" fill="#f8b663" stroke="#bd7730" stroke-width="0.8" stroke-linejoin="round"/><circle cx="4.4" cy="10.4" r="1.01" fill="#fdf6ea" stroke="#bd7730" stroke-width="0.5"/></svg>
<svg style="left:51px;top:216.6px" width="10" height="7" viewBox="0 0 10 7"><path d="M0.9 1.1L4.9 5.1L8.9 1.1" fill="none" stroke="#4a3838" stroke-width="1.6"/></svg>
<svg style="left:72px;top:211px" width="16" height="16" viewBox="0 0 16 16"><rect x="1.2" y="8.4" width="7.6" height="6.2" fill="#fbe9bd" stroke="#d3932a" stroke-width="0.9"/><rect x="2" y="9" width="2.2" height="5" fill="#eeb648"/><rect x="5.8" y="9" width="2.2" height="5" fill="#eeb648"/><polygon points="14.60,6.20 14.52,7.02 13.54,7.50 13.23,8.09 13.37,9.17 12.73,9.69 11.70,9.34 11.06,9.53 10.40,10.40 9.58,10.32 9.10,9.34 8.51,9.03 7.43,9.17 6.91,8.53 7.26,7.50 7.07,6.86 6.20,6.20 6.28,5.38 7.26,4.90 7.57,4.31 7.43,3.23 8.07,2.71 9.10,3.06 9.74,2.87 10.40,2.00 11.22,2.08 11.70,3.06 12.29,3.37 13.37,3.23 13.89,3.87 13.54,4.90 13.73,5.54" fill="#f9bd6c" stroke="#6e3f2c" stroke-width="1.0" stroke-linejoin="round"/><circle cx="10.4" cy="6.2" r="1.09" fill="#fbe9cf" stroke="#6e3f2c" stroke-width="0.5"/></svg>
<svg style="left:97px;top:237px" width="16" height="16" viewBox="0 0 16 16"><path d="M1.2 4h12.6M1.2 8.4h12.6M1.2 12.8h12.6" stroke="#2f65b0" stroke-width="2.5"/></svg>
<svg style="left:48px;top:264.5px" width="16" height="16" viewBox="0 0 16 16"><rect x="6.4" y="1" width="8" height="14" rx="1" fill="#d9dde0" stroke="#8f9498" stroke-width="1"/><rect x="7.8" y="2.4" width="5.2" height="2.6" fill="#f8f8f8" stroke="#9a9a9a" stroke-width="0.5"/><path d="M7.4 7h6M7.4 8.8h6" stroke="#6f7478" stroke-width="0.9"/><rect x="7.8" y="10.4" width="5.2" height="3.6" fill="#b9d3ea"/><path d="M9 3L10.8 3.8L9 4.6Z" fill="#3f8153"/><path d="M0.8 9.6V15.6L6.6 12.6Z" fill="#4b8963" opacity=".9"/></svg>
<svg style="left:2.5px;top:878.5px" width="14" height="14" viewBox="-7 -7 14 14"><path d="M-5.4 2.8L0 -2.6L5.4 2.8" transform="rotate(270)" fill="none" stroke="#555" stroke-width="2.9"/></svg>
<svg style="left:259.5px;top:878.5px" width="14" height="14" viewBox="-7 -7 14 14"><path d="M-5.4 2.8L0 -2.6L5.4 2.8" transform="rotate(90)" fill="none" stroke="#555" stroke-width="2.9"/></svg>
<svg style="left:293.6px;top:104px" width="13.6" height="15" viewBox="0 0 16 16"><path d="M1.8 1.4H9.8L13.6 5.2V15.2H1.8Z" fill="#eef2fc" stroke="#c08a2c" stroke-width="1.2"/><path d="M1.8 11.6V15.2H13.6V11.6" fill="none" stroke="#8a5a4a" stroke-width="1.2"/><path d="M9.8 1.4V5.2H13.6" fill="#f8d9a0" stroke="#c08a2c" stroke-width="0.8"/><path d="M9 4.6V9.6Q9 12.8 5 12.2" fill="none" stroke="#2f62b0" stroke-width="2.4"/></svg>
<svg style="left:419.8px;top:106.9px" width="10.4" height="10.4" viewBox="0 0 11 11"><path d="M0.6 2.4L2.4 0.6L5.5 3.7L8.6 0.6L10.4 2.4L7.3 5.5L10.4 8.6L8.6 10.4L5.5 7.3L2.4 10.4L0.6 8.6L3.7 5.5Z" fill="#fcfcfc" stroke="#4c4c4c" stroke-width="1" stroke-linejoin="round"/></svg>
<svg style="left:1262px;top:103px" width="11" height="5" viewBox="0 0 11 5"><rect x="0.5" y="0.5" width="9.6" height="3.2" fill="#fcfcfc" stroke="#555" stroke-width="1"/></svg>
<svg style="left:1285px;top:103px" width="11" height="11" viewBox="0 0 11 11"><rect x="0.5" y="0.5" width="9.6" height="9.4" fill="#fcfcfc" stroke="#555" stroke-width="1"/><path d="M0.5 2.2h9.6" stroke="#555" stroke-width="1"/></svg>
<svg style="left:1270.5px;top:137.5px" width="14" height="14" viewBox="-7 -7 14 14"><path d="M-5.4 2.8L0 -2.6L5.4 2.8" transform="rotate(0)" fill="none" stroke="#b9b9b9" stroke-width="2.9"/></svg>
<svg style="left:1270.5px;top:648.5px" width="14" height="14" viewBox="-7 -7 14 14"><path d="M-5.4 2.8L0 -2.6L5.4 2.8" transform="rotate(180)" fill="none" stroke="#b9b9b9" stroke-width="2.9"/></svg>
<svg style="left:348.0px;top:674.5px" width="14" height="14" viewBox="-7 -7 14 14"><path d="M-5.4 2.8L0 -2.6L5.4 2.8" transform="rotate(270)" fill="none" stroke="#b9b9b9" stroke-width="2.9"/></svg>
<svg style="left:1243.5px;top:674.5px" width="14" height="14" viewBox="-7 -7 14 14"><path d="M-5.4 2.8L0 -2.6L5.4 2.8" transform="rotate(90)" fill="none" stroke="#b9b9b9" stroke-width="2.9"/></svg>
<svg style="left:290px;top:372.4px" width="11" height="13" viewBox="0 0 11 13"><path d="M0 2.6H3.2V0.4L5 2.4L7 2L10.4 5.4L7 9L5 8.6L3.2 10.6V8.4H0Z" fill="#6f9fd6" stroke="#3a5f9a" stroke-width="0.9"/><path d="M0.2 10.4L1.8 12.2L4.6 9.4" fill="none" stroke="#1f3f8a" stroke-width="1.2"/></svg>
<svg style="left:331.5px;top:272.5px" width="10" height="10" viewBox="0 0 10 10"><circle cx="5" cy="5" r="4.2" fill="#e9edfb" stroke="#a9c6de" stroke-width="0.9"/><path d="M2.6 5h4.8" stroke="#4a3a8a" stroke-width="1.2"/></svg>
<span class="t" style="left:1314.6px;top:107.2px;font-size:10.2px;color:#2f7fd6;letter-spacing:-0.1px">(x)=</span>
<svg style="left:1421.8px;top:106.9px" width="10.4" height="10.4" viewBox="0 0 11 11"><path d="M0.6 2.4L2.4 0.6L5.5 3.7L8.6 0.6L10.4 2.4L7.3 5.5L10.4 8.6L8.6 10.4L5.5 7.3L2.4 10.4L0.6 8.6L3.7 5.5Z" fill="#fcfcfc" stroke="#4c4c4c" stroke-width="1" stroke-linejoin="round"/></svg>
<svg style="left:1444px;top:104.7px" width="16" height="16" viewBox="0 0 16 16"><circle cx="4.4" cy="4.6" r="3.3" fill="#5a90cc" stroke="#2f62a8" stroke-width="0.9"/><circle cx="11.4" cy="10" r="3.3" fill="#5a90cc" stroke="#2f62a8" stroke-width="0.9"/><circle cx="3.6" cy="3.8" r="1.2" fill="#9fc0e6"/><circle cx="10.6" cy="9.2" r="1.2" fill="#9fc0e6"/></svg>
<svg style="left:1575.8px;top:105.4px" width="17" height="15" viewBox="0 0 17 15"><g fill="none" stroke="#1f74d0" stroke-width="1.1"><circle cx="2.9" cy="7" r="2.3"/><circle cx="9.9" cy="7" r="2.3"/><path d="M5.2 6.2Q6.4 5.4 7.6 6.2"/><path d="M1 5.4L5.4 0.9Q6.8 0.3 7 2.4"/><path d="M11.4 5.2L14.4 1.5Q16 1 16 3.6"/></g><path d="M5.6 10.6l2.2 2.4M7.8 10.6L5.6 13M10.6 11h3M10.6 12.8h3" stroke="#1f74d0" stroke-width="1"/></svg>
<svg style="left:1738px;top:103px" width="11" height="5" viewBox="0 0 11 5"><rect x="0.5" y="0.5" width="9.6" height="3.2" fill="#fcfcfc" stroke="#555" stroke-width="1"/></svg>
<svg style="left:1761px;top:103px" width="11" height="11" viewBox="0 0 11 11"><rect x="0.5" y="0.5" width="9.6" height="9.4" fill="#fcfcfc" stroke="#555" stroke-width="1"/><path d="M0.5 2.2h9.6" stroke="#555" stroke-width="1"/></svg>
<svg style="left:1690px;top:131.5px" width="16" height="16" viewBox="0 0 16 16"><g opacity=".55"><path d="M0.8 7.4H14.6V12.6L12.6 14.6H0.8Z" fill="#ececec" stroke="#c9c9c9" stroke-width="1"/><path d="M3 11h2M6.4 11h2M9.8 11h2" stroke="#aaa" stroke-width="1.6"/><path d="M0.6 8.4C4 6 5 3 4.2 0.6M2 2.4L8 8M8.8 1.4Q5 4 3 9" fill="none" stroke="#8f8f8f" stroke-width="1"/></g></svg>
<svg style="left:1712.5px;top:131.5px" width="16" height="16" viewBox="0 0 16 16"><path d="M0.8 6.2H5V4.4L8.6 7.2L5 10V8.2H0.8Z" fill="#fdefb6" stroke="#dda03a" stroke-width="0.8"/><path d="M10.8 14V4" stroke="#4a78c4" stroke-width="1" fill="none"/><path d="M8.8 5.2L10.8 1.4L12.8 5.2Z" fill="#4a78c4"/><path d="M10.8 8.4h2M10.8 12.8h2M13.2 3.6h2.2" stroke="#4a78c4" stroke-width="0.9"/><rect x="13" y="7" width="2.6" height="2.8" fill="#f8dcb8" stroke="#dc6a3a" stroke-width="0.9"/><rect x="13" y="11.4" width="2.6" height="2.8" fill="#f8dcb8" stroke="#dc6a3a" stroke-width="0.9"/></svg>
<svg style="left:1735.4px;top:131px" width="16" height="16" viewBox="0 0 16 16"><rect x="1.8" y="2.2" width="10.6" height="10.2" fill="#dceefa" stroke="#a9b7d6" stroke-width="1"/><rect x="4" y="4.4" width="10.6" height="10.2" fill="#eef7fd" stroke="#8a84b4" stroke-width="1.1"/><path d="M6 9.5h6.8" stroke="#1f3f9a" stroke-width="1.5"/></svg>
<svg style="left:1766.3px;top:131px" width="6" height="16" viewBox="0 0 6 16"><g fill="#fcfcfc" stroke="#444" stroke-width="0.9"><circle cx="3" cy="2.6" r="1.9"/><circle cx="3" cy="7.8" r="1.9"/><circle cx="3" cy="13" r="1.9"/></g></svg>
<svg style="left:1342.6px;top:190px" width="14" height="12" viewBox="0 0 14 12"><path d="M7 2.4H1.6V10H7" fill="none" stroke="#6a6a6a" stroke-width="1.5"/><path d="M4.4 6.2H10" stroke="#4a4a4a" stroke-width="1.5"/><path d="M9.4 3.4L13 6.2L9.4 9Z" fill="#4a4a4a"/></svg>
<svg style="left:1343.4px;top:217.8px" width="10" height="10" viewBox="0 0 10 10"><circle cx="5" cy="5" r="4.7" fill="#8c8c8c"/><path d="M3.8 2.6V7H6.8" fill="none" stroke="#f2f2f2" stroke-width="1.3"/></svg>
<svg style="left:1343.4px;top:244.8px" width="10" height="10" viewBox="0 0 10 10"><circle cx="5" cy="5" r="4.7" fill="#8c8c8c"/><path d="M3.8 2.6V7H6.8" fill="none" stroke="#f2f2f2" stroke-width="1.3"/></svg>
<svg style="left:1759px;top:537px" width="13" height="8" viewBox="0 0 13 8"><path d="M1 1L6.5 6.4L12 1" fill="none" stroke="#a3a3a3" stroke-width="1.1"/></svg>
<svg style="left:1757.5px;top:570.5px" width="14" height="14" viewBox="-7 -7 14 14"><path d="M-5.4 2.8L0 -2.6L5.4 2.8" transform="rotate(0)" fill="none" stroke="#b9b9b9" stroke-width="2.9"/></svg>
<svg style="left:1757.5px;top:648.5px" width="14" height="14" viewBox="-7 -7 14 14"><path d="M-5.4 2.8L0 -2.6L5.4 2.8" transform="rotate(180)" fill="none" stroke="#b9b9b9" stroke-width="2.9"/></svg>
<svg style="left:1318.5px;top:674.5px" width="14" height="14" viewBox="-7 -7 14 14"><path d="M-5.4 2.8L0 -2.6L5.4 2.8" transform="rotate(270)" fill="none" stroke="#b9b9b9" stroke-width="2.9"/></svg>
<svg style="left:1732.0px;top:674.5px" width="14" height="14" viewBox="-7 -7 14 14"><path d="M-5.4 2.8L0 -2.6L5.4 2.8" transform="rotate(90)" fill="none" stroke="#b9b9b9" stroke-width="2.9"/></svg>
<svg style="left:292.8px;top:709.8px" width="15.4" height="15.4" viewBox="0 0 16 16"><rect x="1" y="1" width="13.6" height="10.8" rx="1.6" fill="#2f63ba"/><rect x="3" y="3" width="9.6" height="6.6" fill="#f4f6fc"/><path d="M4.2 5h4.4" stroke="#6a4fa0" stroke-width="1.1"/><path d="M4.2 7.2h6.8" stroke="#2f63ba" stroke-width="1.1"/><rect x="6" y="11.8" width="3.6" height="1.8" fill="#2a5098"/><rect x="2.6" y="13.6" width="10.4" height="1.6" rx="0.5" fill="#2f63ba"/></svg>
<svg style="left:387.6px;top:712.8px" width="10.4" height="10.4" viewBox="0 0 11 11"><path d="M0.6 2.4L2.4 0.6L5.5 3.7L8.6 0.6L10.4 2.4L7.3 5.5L10.4 8.6L8.6 10.4L5.5 7.3L2.4 10.4L0.6 8.6L3.7 5.5Z" fill="#fcfcfc" stroke="#4c4c4c" stroke-width="1" stroke-linejoin="round"/></svg>
<svg style="left:409.6px;top:709.8px" width="15.4" height="15.4" viewBox="0 0 16 16"><path d="M1 1H12.6Q14 4 12.6 7.6Q12 11 14 15H1Z" fill="#f8f8fc" stroke="#8f86b0" stroke-width="1"/><path d="M1 8h12M8.6 1V15" stroke="#b9b2d0" stroke-width="0.9"/><circle cx="5" cy="4.6" r="2.7" fill="#d9303f"/><path d="M5 9.6L8 14.4H2Z" fill="#f0a030" stroke="#d98a1c" stroke-width="0.8" stroke-linejoin="round"/></svg>
<svg style="left:522.6px;top:710.4px" width="14.6" height="15.6" viewBox="0 0 16 16"><rect x="1.6" y="2.4" width="10.8" height="12.8" rx="1" fill="#fbfbfd" stroke="#c49a4c" stroke-width="1.1"/><path d="M3 1v2.4M5 1v2.4M7 1v2.4M9 1v2.4M11 1v2.4" stroke="#555" stroke-width="0.7"/><path d="M8.2 5.4V10Q8.2 12.2 5.2 11.8" fill="none" stroke="#2f62b0" stroke-width="1.8"/><path d="M12.6 11.4V15.4H8.6Z" fill="#4b8963"/></svg>
<svg style="left:1420.6px;top:706.2px" width="16" height="16" viewBox="0 0 16 16"><rect x="2.2" y="2.6" width="11.4" height="11.2" rx="1.6" fill="#d7334c"/><rect x="3.6" y="4" width="8.6" height="8.4" fill="#c7223f" stroke="#f3c26e" stroke-width="0.8"/></svg>
<svg style="left:1443.6px;top:706px" width="16" height="16" viewBox="0 0 16 16"><path d="M0.6 2.4L2.4 0.6L5.5 3.7L8.6 0.6L10.4 2.4L7.3 5.5L10.4 8.6L8.6 10.4L5.5 7.3L2.4 10.4L0.6 8.6L3.7 5.5Z" transform="translate(1.2,1.4) scale(1.22)" fill="#a9a9a9" stroke="#9c9c9c" stroke-width="0.6"/></svg>
<svg style="left:1466.6px;top:706px" width="16" height="16" viewBox="0 0 16 16"><path d="M0.6 2.4L2.4 0.6L5.5 3.7L8.6 0.6L10.4 2.4L7.3 5.5L10.4 8.6L8.6 10.4L5.5 7.3L2.4 10.4L0.6 8.6L3.7 5.5Z" transform="translate(0.6,0.2) scale(0.98)" fill="#f4f4f4" stroke="#bdbdbd" stroke-width="0.9"/><path d="M0.6 2.4L2.4 0.6L5.5 3.7L8.6 0.6L10.4 2.4L7.3 5.5L10.4 8.6L8.6 10.4L5.5 7.3L2.4 10.4L0.6 8.6L3.7 5.5Z" transform="translate(4.6,5.4) scale(1.0)" fill="#a9a9a9" stroke="#9c9c9c" stroke-width="0.6"/></svg>
<div style="left:1488.0px;top:705px;width:1.3px;height:18px;background:#8d8468"></div>
<svg style="left:1497.6px;top:705.6px" width="16" height="16" viewBox="0 0 16 16"><path d="M1 0.8H6.4L9 3.4V13.4H1Z" fill="#fbfbfb" stroke="#c9a768" stroke-width="1"/><path d="M1 13.4H9" stroke="#9a9a9a" stroke-width="1"/><path d="M2.6 4.4h4.8M2.6 6.4h4.8M2.6 8.4h4.8M2.6 10.4h3.6" stroke="#4f7fc8" stroke-width="1"/><path d="M0.6 2.4L2.4 0.6L5.5 3.7L8.6 0.6L10.4 2.4L7.3 5.5L10.4 8.6L8.6 10.4L5.5 7.3L2.4 10.4L0.6 8.6L3.7 5.5Z" transform="translate(8,8) scale(0.72)" fill="#8a8a8a" stroke="#777" stroke-width="0.8"/></svg>
<svg style="left:1520.4px;top:706px" width="16" height="16" viewBox="0 0 16 16"><rect x="2.6" y="1.2" width="12.6" height="13.4" fill="#f2f7fc" stroke="#9a8f9a" stroke-width="1"/><path d="M2.6 1.2H15.2" stroke="#c9a768" stroke-width="1.2"/><rect x="11" y="2" width="3.6" height="12" fill="#dfe8f6" stroke="#5a78b8" stroke-width="0.8"/><rect x="11.6" y="6" width="2.4" height="4" fill="#fbfbfb" stroke="#5a78b8" stroke-width="0.6"/><path d="M12.8 3.4v1M12.8 11.6v1" stroke="#2f4f9a" stroke-width="1.2"/><rect x="0.8" y="9.6" width="7.4" height="5.8" rx="1" fill="#f0a030" stroke="#c87a12" stroke-width="1"/><path d="M2.4 9.6V8Q2.4 5.8 4.5 5.8Q6.6 5.8 6.6 8V9.6" fill="none" stroke="#c87a12" stroke-width="1.5"/><rect x="4" y="11.4" width="1.2" height="2.4" fill="#8a4a0a"/></svg>
<svg style="left:1543.6px;top:705.4px" width="16" height="16" viewBox="0 0 16 16"><path d="M0.8 0.8H8.2L10.4 3V13.6H0.8Z" fill="#fbfbfb" stroke="#c9a768" stroke-width="1"/><path d="M2.6 4h5.4M2.6 6.2h4M2.6 8.4h3M2.6 10.6h3.4" stroke="#4f7fc8" stroke-width="1"/><path d="M0.8 13.6h9.6" stroke="#9a9a9a" stroke-width="1"/><path d="M12.4 2.6h2.4v7.2H9.4v2L5.8 8.8L9.4 5.8v2h3z" fill="#fdf0c8" stroke="#d18b1c" stroke-width="1"/></svg>
<svg style="left:1567.4px;top:706px" width="16" height="16" viewBox="0 0 16 16"><rect x="0.8" y="8" width="7" height="5.4" fill="#f2f5fb" stroke="#3f6fc0" stroke-width="1.1"/><rect x="2.6" y="13.6" width="3.4" height="1" fill="#3f6fc0"/><path d="M1.6 15.6h5.6" stroke="#2f5098" stroke-width="1.1"/><rect x="4" y="0.8" width="11.4" height="8.2" rx="0.8" fill="#f8fafd" stroke="#2f6fd0" stroke-width="1.3"/><path d="M5 9L4 12L8 9Z" fill="#f8fafd" stroke="#2f6fd0" stroke-width="0.8"/><path d="M6.4 3.6h6.6M6.4 6h4.6" stroke="#3f6fc0" stroke-width="1.1"/></svg>
<svg style="left:1590.6px;top:706px" width="16" height="16" viewBox="0 0 16 16"><rect x="0.8" y="8" width="7" height="5.4" fill="#f2f5fb" stroke="#3f6fc0" stroke-width="1.1"/><rect x="2.6" y="13.6" width="3.4" height="1" fill="#3f6fc0"/><path d="M1.6 15.6h5.6" stroke="#2f5098" stroke-width="1.1"/><rect x="4" y="0.8" width="11.4" height="8.2" rx="0.8" fill="#f8fafd" stroke="#2f6fd0" stroke-width="1.3"/><path d="M5 9L4 12L8 9Z" fill="#f8fafd" stroke="#2f6fd0" stroke-width="0.8"/><path d="M6 2.8l3.6 3.8M9.6 2.8L6 6.6" stroke="#d9402a" stroke-width="1.6"/><path d="M11 3.6h2.8M11 6h2.8" stroke="#3f6fc0" stroke-width="1.1"/></svg>
<div style="left:1611.1px;top:705px;width:1.3px;height:18px;background:#8d8468"></div>
<svg style="left:1621px;top:706px" width="16" height="16" viewBox="0 0 16 16"><rect x="1" y="5.4" width="12.4" height="9.2" fill="#f2f6fd" stroke="#a59a80" stroke-width="1"/><rect x="1" y="5.2" width="12.4" height="2" fill="#3f7fd0"/><path d="M1.6 14L12.8 7.4" stroke="#dfe8f4" stroke-width="1"/><path d="M10.6 2.2L13.6 0.8L15.4 3.6L13.2 6L9.8 5.6Z" fill="#3c7a4e"/><path d="M10.4 5.4L8 8.4" stroke="#2f4f3a" stroke-width="1.2"/></svg>
<svg style="left:1645px;top:706px" width="16" height="16" viewBox="0 0 16 16"><rect x="1.2" y="1" width="13.2" height="10.6" rx="1.6" fill="#a3a3a3"/><rect x="3.2" y="3" width="9.2" height="6.6" fill="#f2f2f2"/><path d="M4.4 5h5.2M4.4 7.2h6.6" stroke="#a9a9a9" stroke-width="1.1"/><rect x="6" y="11.6" width="3.6" height="1.8" fill="#9a9a9a"/><rect x="2.4" y="13.4" width="10.8" height="1.6" rx="0.5" fill="#a3a3a3"/></svg>
<svg style="left:1668.4px;top:711px" width="12" height="7" viewBox="0 0 12 7"><path d="M0.2 0H11.8L6 6.4Z" fill="#6f6a6f"/></svg>
<svg style="left:1690px;top:705.2px" width="16" height="16" viewBox="0 0 16 16"><rect x="1.6" y="3.6" width="13" height="11" fill="#f8fafe" stroke="#c08a5a" stroke-width="1"/><path d="M1.2 14.6H15" stroke="#8f7f6a" stroke-width="1"/><rect x="1.2" y="3" width="9.6" height="2.8" fill="#2a78cc"/><path d="M2 4.4h8" stroke="#62b0f4" stroke-width="0.9"/><path d="M5 14.6C9 13.8 11.6 11.4 12.4 8" stroke="#fbe9b4" stroke-width="1.1" fill="none" stroke-dasharray="1 0.6"/><path d="M12.5 0.7L16.1 4.4L12.5 8.1L8.9 4.4Z" fill="#c8861c"/><path d="M12.5 1.9L13.2 3.7L15 4.4L13.2 5.1L12.5 6.9L11.8 5.1L10 4.4L11.8 3.7Z" fill="#fff6de"/></svg>
<svg style="left:1714.4px;top:711px" width="12" height="7" viewBox="0 0 12 7"><path d="M0.2 0H11.8L6 6.4Z" fill="#000"/></svg>
<svg style="left:1738px;top:709px" width="11" height="5" viewBox="0 0 11 5"><rect x="0.5" y="0.5" width="9.6" height="3.2" fill="#fcfcfc" stroke="#555" stroke-width="1"/></svg>
<svg style="left:1761px;top:709px" width="11" height="11" viewBox="0 0 11 11"><rect x="0.5" y="0.5" width="9.6" height="9.4" fill="#fcfcfc" stroke="#555" stroke-width="1"/><path d="M0.5 2.2h9.6" stroke="#555" stroke-width="1"/></svg>
<svg style="left:1757.5px;top:770.0px" width="14" height="14" viewBox="-7 -7 14 14"><path d="M-5.4 2.8L0 -2.6L5.4 2.8" transform="rotate(0)" fill="none" stroke="#b9b9b9" stroke-width="2.9"/></svg>
<svg style="left:1757.5px;top:853.5px" width="14" height="14" viewBox="-7 -7 14 14"><path d="M-5.4 2.8L0 -2.6L5.4 2.8" transform="rotate(180)" fill="none" stroke="#b9b9b9" stroke-width="2.9"/></svg>
<svg style="left:295.5px;top:879.5px" width="14" height="14" viewBox="-7 -7 14 14"><path d="M-5.4 2.8L0 -2.6L5.4 2.8" transform="rotate(270)" fill="none" stroke="#b9b9b9" stroke-width="2.9"/></svg>
<svg style="left:1732.0px;top:879.5px" width="14" height="14" viewBox="-7 -7 14 14"><path d="M-5.4 2.8L0 -2.6L5.4 2.8" transform="rotate(90)" fill="none" stroke="#b9b9b9" stroke-width="2.9"/></svg>
<svg style="left:1361.0px;top:903px" width="2" height="16" viewBox="0 0 2 16"><path d="M0.2 0h1.6v1.8h-1.6zM0.2 4.4h1.6v1.6h-1.6zM0.2 8.8h1.6v1.6h-1.6zM0.2 13.2h1.6v1.6h-1.6z" fill="#c9ab8b"/></svg>
<svg style="left:1755.0px;top:903px" width="2" height="16" viewBox="0 0 2 16"><path d="M0.2 0h1.6v1.8h-1.6zM0.2 4.4h1.6v1.6h-1.6zM0.2 8.8h1.6v1.6h-1.6zM0.2 13.2h1.6v1.6h-1.6z" fill="#c9ab8b"/></svg>
<svg style="left:1764px;top:906px" width="14" height="14" viewBox="0 0 14 14"><circle cx="7" cy="7" r="5.4" fill="#fdf0c0" stroke="#e8a63a" stroke-width="1.6"/></svg>
<svg style="left:1086px;top:586px" width="19" height="27" viewBox="0 0 19 27"><path d="M0.6 0.6V23.4L5.6 19.2L8.6 25.6L13 24.6L10.4 18.2H17.6Z" fill="#fdfdfd" stroke="#1a1420" stroke-width="1" stroke-linejoin="miter"/></svg>
<span class="t" style="left:33.70px;top:4px;font-size:20px;letter-spacing:-0.389px;color:#a4a4a4;">eclipse-workspace-charles</span>
<span class="t" style="left:265.70px;top:4px;font-size:20px;color:#a4a4a4;">-</span>
<span class="t" style="left:278.10px;top:4px;font-size:20px;letter-spacing:-0.147px;color:#a4a4a4;">Demo/src/demo1/Demo1.java</span>
<span class="t" style="left:544.70px;top:4px;font-size:20px;color:#a4a4a4;">-</span>
<span class="t" style="left:557.40px;top:4px;font-size:20px;letter-spacing:-0.993px;color:#a4a4a4;">Eclipse IDE</span>
<span class="t" style="left:2.00px;top:42px;font-size:19.5px;letter-spacing:-0.659px;color:#555;">File</span>
<span class="t" style="left:45.50px;top:42px;font-size:19.5px;letter-spacing:-0.128px;color:#555;">Edit</span>
<span class="t" style="left:92.50px;top:42px;font-size:19.5px;letter-spacing:-0.568px;color:#555;">Source</span>
<span class="t" style="left:165.70px;top:42px;font-size:19.5px;letter-spacing:-0.329px;color:#555;">Refactor</span>
<span class="t" style="left:251.90px;top:42px;font-size:19.5px;letter-spacing:0.083px;color:#555;">Navigate</span>
<span class="t" style="left:343.00px;top:42px;font-size:19.5px;letter-spacing:-0.788px;color:#555;">Search</span>
<span class="t" style="left:414.70px;top:42px;font-size:19.5px;letter-spacing:-0.379px;color:#555;">Project</span>
<span class="t" style="left:488.40px;top:42px;font-size:19.5px;letter-spacing:-0.814px;color:#555;">Run</span>
<span class="t" style="left:536.50px;top:42px;font-size:19.5px;letter-spacing:0.106px;color:#555;">Window</span>
<span class="t" style="left:621.60px;top:42px;font-size:19.5px;letter-spacing:0.113px;color:#555;">Help</span>
<span class="t" style="left:18.80px;top:104px;font-size:19.5px;letter-spacing:0.246px;">Debug</span>
<span class="t" style="left:127.00px;top:104px;font-size:19.5px;letter-spacing:-0.668px;">Project E...</span>
<span class="t" style="left:45.60px;top:156px;font-size:19.5px;letter-spacing:-0.039px;">Demo1 [Java Application]</span>
<span class="t" style="left:69.80px;top:183px;font-size:19.5px;letter-spacing:-0.100px;width:210.20px;overflow:hidden;">demo1.Demo1 at localhost:51426</span>
<span class="t" style="left:93.10px;top:210px;font-size:19.5px;letter-spacing:-0.251px;width:186.90px;overflow:hidden;">Thread [main] (Suspended)</span>
<span class="t" style="left:117.80px;top:237px;font-size:19.5px;letter-spacing:-0.079px;width:162.20px;overflow:hidden;">Demo1.main(String[]) line: 8</span>
<span class="t" style="left:69.80px;top:264px;font-size:19.5px;letter-spacing:-0.160px;width:210.20px;overflow:hidden;">D:\Develop\Java\jdk1.8.0_202\bin\javaw.exe</span>
<span class="t" style="left:311.80px;top:104px;font-size:19.5px;letter-spacing:-0.367px;">Demo1.java</span>
<span class="t m" style="left:316.70px;top:136px;font-size:26px;letter-spacing:-0.600px;color:#787878;">1</span>
<span class="t m" style="left:316.70px;top:169px;font-size:26px;letter-spacing:-0.600px;color:#787878;">2</span>
<span class="t m" style="left:316.70px;top:202px;font-size:26px;letter-spacing:-0.600px;color:#787878;">3</span>
<span class="t m" style="left:316.70px;top:235px;font-size:26px;letter-spacing:-0.600px;color:#787878;">4</span>
<span class="t m" style="left:316.70px;top:268px;font-size:26px;letter-spacing:-0.600px;color:#787878;">5</span>
<span class="t m" style="left:316.70px;top:301px;font-size:26px;letter-spacing:-0.600px;color:#787878;">6</span>
<span class="t m" style="left:316.70px;top:334px;font-size:26px;letter-spacing:-0.600px;color:#787878;">7</span>
<span class="t m" style="left:316.70px;top:367px;font-size:26px;letter-spacing:-0.600px;color:#787878;">8</span>
<span class="t m" style="left:316.70px;top:400px;font-size:26px;letter-spacing:-0.600px;color:#787878;">9</span>
<span class="t m" style="left:301.70px;top:433px;font-size:26px;letter-spacing:-0.600px;color:#787878;">10</span>
<span class="t m" style="left:301.70px;top:466px;font-size:26px;letter-spacing:-0.600px;color:#787878;">11</span>
<span class="t m" style="left:301.70px;top:499px;font-size:26px;letter-spacing:-0.600px;color:#787878;">12</span>
<span class="t m" style="left:301.70px;top:532px;font-size:26px;letter-spacing:-0.600px;color:#787878;">13</span>
<span class="t m" style="left:301.70px;top:565px;font-size:26px;letter-spacing:-0.600px;color:#787878;">14</span>
<span class="t m" style="left:301.70px;top:598px;font-size:26px;letter-spacing:-0.600px;color:#787878;">15</span>
<span class="t m" style="left:344.00px;top:137px;font-size:25px;color:#7f0055;font-weight:bold;">package</span>
<span class="t m" style="left:464.00px;top:137px;font-size:25px;">demo1;</span>
<span class="t m" style="left:344.00px;top:203px;font-size:25px;color:#7f0055;font-weight:bold;">public</span>
<span class="t m" style="left:449.00px;top:203px;font-size:25px;color:#7f0055;font-weight:bold;">class</span>
<span class="t m" style="left:539.00px;top:203px;font-size:25px;">Demo1 {</span>
<span class="t m" style="left:404.00px;top:269px;font-size:25px;color:#7f0055;font-weight:bold;">public</span>
<span class="t m" style="left:509.00px;top:269px;font-size:25px;color:#7f0055;font-weight:bold;">static</span>
<span class="t m" style="left:614.00px;top:269px;font-size:25px;color:#7f0055;font-weight:bold;">void</span>
<span class="t m" style="left:689.00px;top:269px;font-size:25px;">main(String[] </span>
<span class="t m" style="left:899.00px;top:269px;font-size:25px;color:#6a3e3e;">args</span>
<span class="t m" style="left:959.00px;top:269px;font-size:25px;">) {</span>
<span class="t m" style="left:464.00px;top:302px;font-size:25px;color:#7f0055;font-weight:bold;">int</span>
<span class="t m" style="left:524.00px;top:302px;font-size:25px;color:#6a3e3e;">i</span>
<span class="t m" style="left:554.00px;top:302px;font-size:25px;">= 1;</span>
<span class="t m" style="left:464.00px;top:335px;font-size:25px;">System.</span>
<span class="t m" style="left:569.00px;top:335px;font-size:25px;color:#0000c0;font-weight:bold;font-style:italic;">out</span>
<span class="t m" style="left:614.00px;top:335px;font-size:25px;">.println(</span>
<span class="t m" style="left:749.00px;top:335px;font-size:25px;color:#2a00ff;">&quot;</span>
<span class="t m" style="left:464.00px;top:368px;font-size:25px;color:#7f0055;font-weight:bold;">while</span>
<span class="t m" style="left:539.00px;top:368px;font-size:25px;">(</span>
<span class="t m" style="left:554.00px;top:368px;font-size:25px;color:#6a3e3e;">i</span>
<span class="t m" style="left:584.00px;top:368px;font-size:25px;">&lt; 5){</span>
<span class="t m" style="left:524.00px;top:401px;font-size:25px;">System.</span>
<span class="t m" style="left:629.00px;top:401px;font-size:25px;color:#0000c0;font-weight:bold;font-style:italic;">out</span>
<span class="t m" style="left:674.00px;top:401px;font-size:25px;">.println(</span>
<span class="t m" style="left:809.00px;top:401px;font-size:25px;color:#6a3e3e;">i</span>
<span class="t m" style="left:824.00px;top:401px;font-size:25px;">);</span>
<span class="t m" style="left:524.00px;top:434px;font-size:25px;color:#6a3e3e;">i</span>
<span class="t m" style="left:539.00px;top:434px;font-size:25px;">++;</span>
<span class="t m" style="left:464.00px;top:467px;font-size:25px;">}</span>
<span class="t m" style="left:404.00px;top:500px;font-size:25px;">}</span>
<span class="t m" style="left:344.00px;top:566px;font-size:25px;">}</span>
<span class="t c" style="left:763.58px;top:334px;font-size:27px;letter-spacing:1.000px;color:#2a00ff;">程序调试演示，注意观察</span>
<span class="t m" style="left:1078.60px;top:335px;font-size:25px;color:#2a00ff;font-weight:bold;">i</span>
<span class="t c" style="left:1109.89px;top:334px;font-size:27px;letter-spacing:1.000px;color:#2a00ff;">的值：</span>
<span class="t m" style="left:1189.70px;top:335px;font-size:25px;color:#2a00ff;">&quot;</span>
<span class="t m" style="left:1202.40px;top:335px;font-size:25px;">);</span>
<span class="t" style="left:1334.80px;top:104px;font-size:19.5px;letter-spacing:-0.087px;">Variables</span>
<span class="t" style="left:1464.40px;top:104px;font-size:19.5px;letter-spacing:-0.152px;">Breakpoints</span>
<span class="t" style="left:1596.30px;top:104px;font-size:19.5px;letter-spacing:-0.786px;">Expressions</span>
<span class="t" style="left:1319.40px;top:158px;font-size:19.5px;letter-spacing:0.143px;">Name</span>
<span class="t" style="left:1552.20px;top:158px;font-size:19.5px;letter-spacing:-0.020px;">Value</span>
<span class="t" style="left:1361.50px;top:186px;font-size:19.5px;letter-spacing:-0.048px;width:183.50px;overflow:hidden;">no method return value</span>
<span class="t" style="left:1361.90px;top:213px;font-size:19.5px;letter-spacing:-0.495px;">args</span>
<span class="t" style="left:1361.40px;top:240px;font-size:19.5px;">i</span>
<span class="t" style="left:1550.90px;top:213px;font-size:19.5px;letter-spacing:0.235px;">String[0]  (id=16)</span>
<span class="t" style="left:1552.20px;top:240px;font-size:19.5px;">1</span>
<span class="t" style="left:1318.30px;top:532px;font-size:19.5px;letter-spacing:-0.198px;color:#666;">&lt;Choose a previously entered expression&gt;</span>
<span class="t" style="left:311.70px;top:710px;font-size:19.5px;letter-spacing:-0.533px;">Console</span>
<span class="t" style="left:430.60px;top:710px;font-size:19.5px;letter-spacing:-0.359px;">Problems</span>
<span class="t" style="left:541.60px;top:710px;font-size:19.5px;letter-spacing:-0.261px;">Debug Shell</span>
<span class="t" style="left:290.40px;top:739px;font-size:19.5px;letter-spacing:-0.017px;">Demo1 [Java Application]</span>
<span class="t" style="left:516.80px;top:739px;font-size:19.5px;letter-spacing:-0.165px;">D:\Develop\Java\jdk</span>
<span class="t" style="left:689.30px;top:739px;font-size:19.5px;letter-spacing:-0.638px;">1.8.0_202</span>
<span class="t" style="left:770.50px;top:739px;font-size:19.5px;letter-spacing:0.019px;">\bin\javaw.exe</span>
<span class="t" style="left:904.00px;top:739px;font-size:19.5px;letter-spacing:0.383px;">(2021-1-13</span>
<span class="t" style="left:1010.00px;top:739px;font-size:19.5px;letter-spacing:-0.563px;">18:12:14)</span>
<span class="t c" style="left:291.58px;top:769px;font-size:27px;letter-spacing:1.000px;">程序调试演示，注意观察</span>
<span class="t m" style="left:606.60px;top:769px;font-size:25px;font-weight:bold;">i</span>
<span class="t c" style="left:637.89px;top:769px;font-size:27px;letter-spacing:1.000px;">的值：</span>
<span class="t" style="left:807.50px;top:904px;font-size:19.5px;letter-spacing:0.440px;">Writable</span>
<span class="t" style="left:1000.10px;top:904px;font-size:19.5px;letter-spacing:-0.134px;">Smart Insert</span>
<span class="t" style="left:1186.00px;top:904px;font-size:19.5px;letter-spacing:-0.389px;">8 : 1 : 143</span>
</body></html>
